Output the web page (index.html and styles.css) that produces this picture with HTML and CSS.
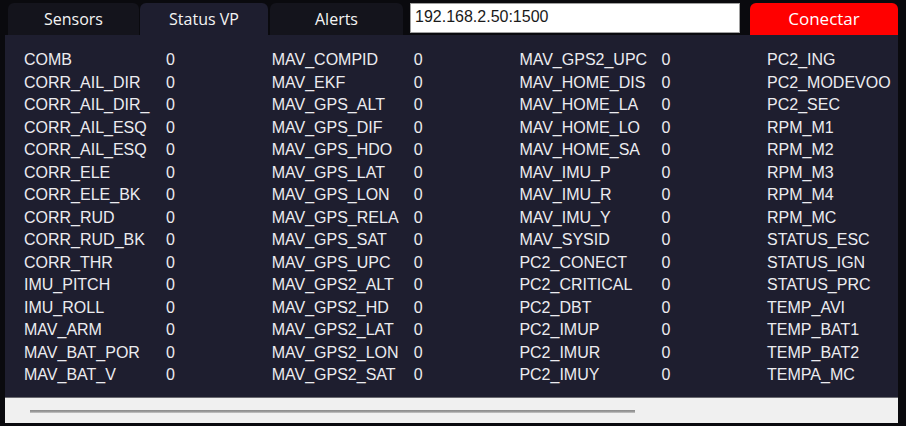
FILE: index.html
```html
<!DOCTYPE html>
<html lang="es">
<head>
<meta charset="utf-8">
<title>Status VP</title>
<link rel="stylesheet" href="styles.css">
</head>
<body>
<div class="app">
  <div class="topbar">
    <div class="tab tab-sensors">Sensors</div>
    <div class="tab tab-status active">Status VP</div>
    <div class="tab tab-alerts">Alerts</div>
    <input class="address" type="text" value="192.168.2.50:1500">
    <button class="connect">Conectar</button>
  </div>
  <div class="content">
    <div class="grid">
      <div class="item"><span class="label">COMB</span><span class="value">0</span></div>
      <div class="item"><span class="label">CORR_AIL_DIR</span><span class="value">0</span></div>
      <div class="item"><span class="label">CORR_AIL_DIR_</span><span class="value">0</span></div>
      <div class="item"><span class="label">CORR_AIL_ESQ</span><span class="value">0</span></div>
      <div class="item"><span class="label">CORR_AIL_ESQ</span><span class="value">0</span></div>
      <div class="item"><span class="label">CORR_ELE</span><span class="value">0</span></div>
      <div class="item"><span class="label">CORR_ELE_BK</span><span class="value">0</span></div>
      <div class="item"><span class="label">CORR_RUD</span><span class="value">0</span></div>
      <div class="item"><span class="label">CORR_RUD_BK</span><span class="value">0</span></div>
      <div class="item"><span class="label">CORR_THR</span><span class="value">0</span></div>
      <div class="item"><span class="label">IMU_PITCH</span><span class="value">0</span></div>
      <div class="item"><span class="label">IMU_ROLL</span><span class="value">0</span></div>
      <div class="item"><span class="label">MAV_ARM</span><span class="value">0</span></div>
      <div class="item"><span class="label">MAV_BAT_POR</span><span class="value">0</span></div>
      <div class="item"><span class="label">MAV_BAT_V</span><span class="value">0</span></div>

      <div class="item"><span class="label">MAV_COMPID</span><span class="value">0</span></div>
      <div class="item"><span class="label">MAV_EKF</span><span class="value">0</span></div>
      <div class="item"><span class="label">MAV_GPS_ALT</span><span class="value">0</span></div>
      <div class="item"><span class="label">MAV_GPS_DIF</span><span class="value">0</span></div>
      <div class="item"><span class="label">MAV_GPS_HDO</span><span class="value">0</span></div>
      <div class="item"><span class="label">MAV_GPS_LAT</span><span class="value">0</span></div>
      <div class="item"><span class="label">MAV_GPS_LON</span><span class="value">0</span></div>
      <div class="item"><span class="label">MAV_GPS_RELA</span><span class="value">0</span></div>
      <div class="item"><span class="label">MAV_GPS_SAT</span><span class="value">0</span></div>
      <div class="item"><span class="label">MAV_GPS_UPC</span><span class="value">0</span></div>
      <div class="item"><span class="label">MAV_GPS2_ALT</span><span class="value">0</span></div>
      <div class="item"><span class="label">MAV_GPS2_HD</span><span class="value">0</span></div>
      <div class="item"><span class="label">MAV_GPS2_LAT</span><span class="value">0</span></div>
      <div class="item"><span class="label">MAV_GPS2_LON</span><span class="value">0</span></div>
      <div class="item"><span class="label">MAV_GPS2_SAT</span><span class="value">0</span></div>

      <div class="item"><span class="label">MAV_GPS2_UPC</span><span class="value">0</span></div>
      <div class="item"><span class="label">MAV_HOME_DIS</span><span class="value">0</span></div>
      <div class="item"><span class="label">MAV_HOME_LA</span><span class="value">0</span></div>
      <div class="item"><span class="label">MAV_HOME_LO</span><span class="value">0</span></div>
      <div class="item"><span class="label">MAV_HOME_SA</span><span class="value">0</span></div>
      <div class="item"><span class="label">MAV_IMU_P</span><span class="value">0</span></div>
      <div class="item"><span class="label">MAV_IMU_R</span><span class="value">0</span></div>
      <div class="item"><span class="label">MAV_IMU_Y</span><span class="value">0</span></div>
      <div class="item"><span class="label">MAV_SYSID</span><span class="value">0</span></div>
      <div class="item"><span class="label">PC2_CONECT</span><span class="value">0</span></div>
      <div class="item"><span class="label">PC2_CRITICAL</span><span class="value">0</span></div>
      <div class="item"><span class="label">PC2_DBT</span><span class="value">0</span></div>
      <div class="item"><span class="label">PC2_IMUP</span><span class="value">0</span></div>
      <div class="item"><span class="label">PC2_IMUR</span><span class="value">0</span></div>
      <div class="item"><span class="label">PC2_IMUY</span><span class="value">0</span></div>

      <div class="item"><span class="label">PC2_ING</span></div>
      <div class="item"><span class="label">PC2_MODEVOO</span></div>
      <div class="item"><span class="label">PC2_SEC</span></div>
      <div class="item"><span class="label">RPM_M1</span></div>
      <div class="item"><span class="label">RPM_M2</span></div>
      <div class="item"><span class="label">RPM_M3</span></div>
      <div class="item"><span class="label">RPM_M4</span></div>
      <div class="item"><span class="label">RPM_MC</span></div>
      <div class="item"><span class="label">STATUS_ESC</span></div>
      <div class="item"><span class="label">STATUS_IGN</span></div>
      <div class="item"><span class="label">STATUS_PRC</span></div>
      <div class="item"><span class="label">TEMP_AVI</span></div>
      <div class="item"><span class="label">TEMP_BAT1</span></div>
      <div class="item"><span class="label">TEMP_BAT2</span></div>
      <div class="item"><span class="label">TEMPA_MC</span></div>
    </div>
  </div>
  <div class="hscroll">
    <div class="thumb"></div>
  </div>
</div>
</body>
</html>
```

FILE: styles.css
```css
html, body {
  margin: 0;
  padding: 0;
  background: #0a0a0e;
  width: 906px;
  height: 426px;
  overflow: hidden;
}

.app {
  width: 893px;
  margin-left: 5px;
  display: flex;
  flex-direction: column;
}

.topbar {
  height: 35px;
  display: flex;
  align-items: flex-end;
  padding-left: 3px;
}

.tab {
  height: 32px;
  box-sizing: border-box;
  background: #14141c;
  color: #f4f4f4;
  font-family: "Open Sans", "Noto Sans", sans-serif;
  font-size: 16px;
  display: flex;
  align-items: center;
  justify-content: center;
  border-radius: 6px 6px 0 0;
  padding-bottom: 1px;
}

.tab.active {
  background: #1e1e2f;
}

.tab-sensors { width: 131px; margin-right: 1px; }
.tab-status { width: 128px; margin-right: 2px; }
.tab-alerts { width: 133px; }

.address {
  align-self: flex-start;
  margin-top: 3px;
  margin-left: 7px;
  width: 330px;
  height: 30px;
  box-sizing: border-box;
  border: 1px solid #a0a0a0;
  background: #ffffff;
  color: #1a1a1a;
  font-family: "Liberation Sans", Arial, sans-serif;
  font-size: 16px;
  padding: 0 0 2px 4px;
  outline: none;
}

.connect {
  align-self: flex-start;
  margin-top: 3px;
  margin-left: 10px;
  width: 148px;
  height: 32px;
  border: none;
  border-radius: 6px 6px 0 0;
  background: #ff0000;
  color: #ffffff;
  font-family: "Open Sans", "Noto Sans", sans-serif;
  font-size: 17px;
  padding: 0 0 2px 0;
}

.content {
  height: 362px;
  box-sizing: border-box;
  background: #1e1e2f;
  padding: 14px 0 0 19px;
  overflow: hidden;
}

.grid {
  display: grid;
  grid-auto-flow: column;
  grid-template-rows: repeat(15, 22.5px);
  grid-auto-columns: 247.7px;
}

.item {
  display: flex;
  font-family: "Liberation Sans", Arial, sans-serif;
  font-size: 16px;
  line-height: 22.5px;
  color: #ececf0;
  white-space: nowrap;
}

.label {
  width: 142px;
  flex: none;
}

.hscroll {
  height: 26px;
  box-sizing: border-box;
  border-top: 1px solid #6a6a70;
  background: #f0f0f0;
  padding-top: 12px;
  padding-left: 25px;
}

.thumb {
  width: 605px;
  height: 3px;
  background: linear-gradient(#8a8a8a, #9a9a9a 50%, #c8c8c8);
}
```
